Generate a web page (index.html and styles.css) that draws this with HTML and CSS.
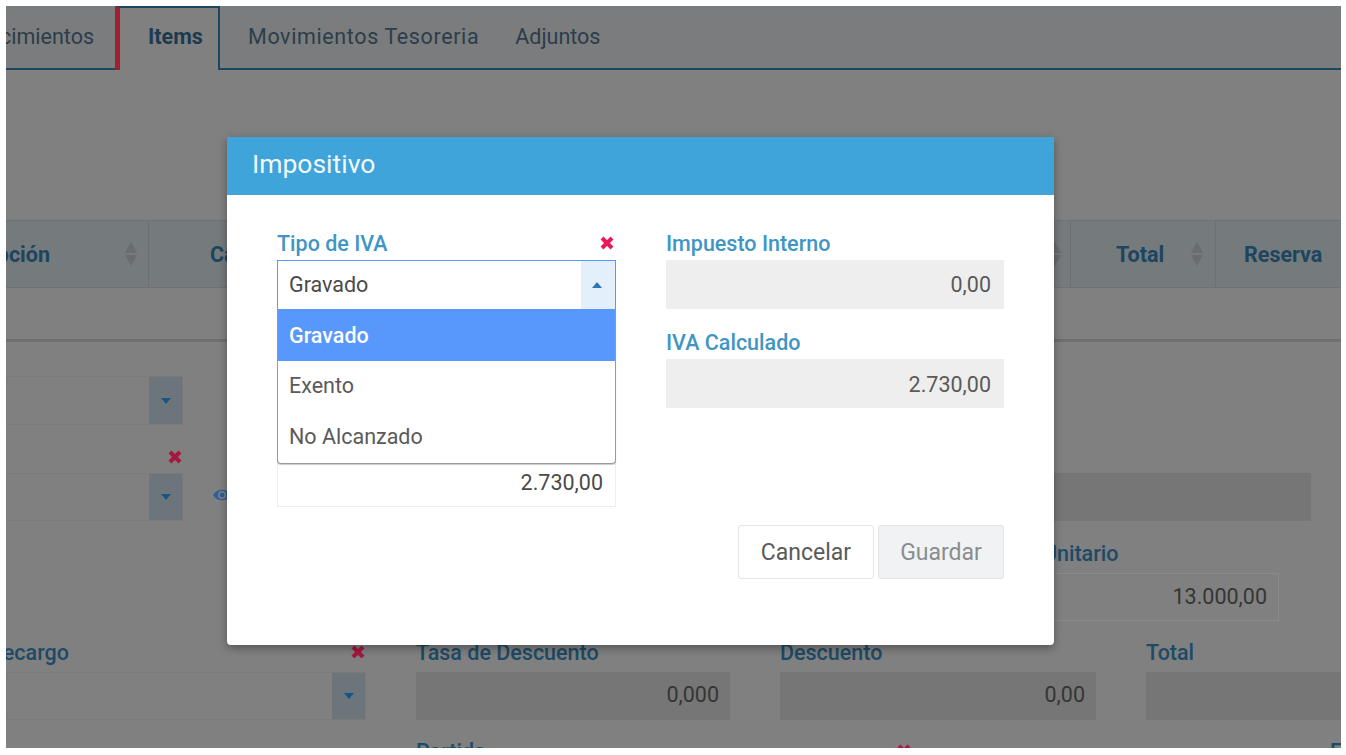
FILE: index.html
```html
<!DOCTYPE html>
<html lang="es">
<head>
  <meta charset="UTF-8" />
  <title>Impositivo</title>
  <link rel="stylesheet" href="styles.css">
</head>
<body>
  <svg class="sprites" width="0" height="0">
    <symbol id="icon-x" viewBox="0 0 14 14">
      <path d="M2 2 L12 12 M12 2 L2 12" fill="none" stroke="currentColor" stroke-width="4"/>
    </symbol>
    <symbol id="icon-down" viewBox="0 0 10 6"><path d="M0 0 H10 L5 6 Z" fill="currentColor"/></symbol>
    <symbol id="icon-up" viewBox="0 0 10 6"><path d="M0 6 H10 L5 0 Z" fill="currentColor"/></symbol>
    <symbol id="icon-sort" viewBox="0 0 12 24">
      <path d="M0 11 H12 L6 0 Z M0 13 H12 L6 24 Z" fill="currentColor"/>
    </symbol>
  </svg>

  <div class="page">
    <nav class="tabs">
      <a class="tab tab-cut">Vencimientos</a>
      <a class="tab tab-active">Items</a>
      <a class="tab tab-long">Movimientos Tesoreria</a>
      <a class="tab">Adjuntos</a>
    </nav>

    <div class="grid-head">
      <div class="col col-desc"><span>Descripción</span><svg class="sort"><use href="#icon-sort"/></svg></div>
      <div class="col col-cant"><span>Cantidad</span><svg class="sort"><use href="#icon-sort"/></svg></div>
      <div class="col col-total"><span>Total</span><svg class="sort"><use href="#icon-sort"/></svg></div>
      <div class="col col-reserva"><span>Reserva</span></div>
    </div>
    <div class="grid-empty"></div>

    <form class="form">
      <div class="row row-first">
        <div class="select w-small"><span class="select-btn"><svg class="arrow"><use href="#icon-down"/></svg></span></div>
      </div>
      <div class="row row-second">
        <div class="field w-small">
          <div class="label"><span></span><svg class="x"><use href="#icon-x"/></svg></div>
          <div class="select"><span class="select-btn"><svg class="arrow"><use href="#icon-down"/></svg></span></div>
        </div>
        <svg class="eye" viewBox="0 0 18 14"><path d="M0 7 C4 0 14 0 18 7 C14 14 4 14 0 7 Z" fill="#2f5f9a"/><circle cx="9" cy="7" r="4" fill="#808080"/><circle cx="9" cy="7" r="2.4" fill="#2f5f9a"/></svg>
        <div class="input input-off w-wide"></div>
      </div>
      <div class="row row-third">
        <div class="field w-unit">
          <div class="label"><span>Precio Unitario</span></div>
          <div class="input input-plain">13.000,00</div>
        </div>
      </div>
      <div class="row row-fourth">
        <div class="field w-rec">
          <div class="label label-cut"><span>Tasa de Recargo</span><svg class="x"><use href="#icon-x"/></svg></div>
          <div class="select"><span class="select-btn"><svg class="arrow"><use href="#icon-down"/></svg></span></div>
        </div>
        <div class="field w-tasa">
          <div class="label"><span>Tasa de Descuento</span></div>
          <div class="input input-off">0,000</div>
        </div>
        <div class="field w-desc">
          <div class="label"><span>Descuento</span></div>
          <div class="input input-off">0,00</div>
        </div>
        <div class="field w-tot">
          <div class="label"><span>Total</span></div>
          <div class="input input-off"></div>
        </div>
      </div>
      <div class="row row-fifth">
        <div class="label w-part"><span>Partida</span><svg class="x"><use href="#icon-x"/></svg></div>
        <div class="label w-end"><span>Estado</span></div>
      </div>
    </form>

    <div class="modal">
      <div class="modal-head">Impositivo</div>
      <div class="modal-body">
        <div class="modal-col">
          <div class="m-field">
            <div class="m-label"><span>Tipo de IVA</span><svg class="m-x"><use href="#icon-x"/></svg></div>
            <div class="m-select">
              <span>Gravado</span>
              <span class="m-select-btn"><svg class="arrow"><use href="#icon-up"/></svg></span>
              <ul class="m-options">
                <li class="m-option-on">Gravado</li>
                <li>Exento</li>
                <li>No Alcanzado</li>
              </ul>
            </div>
          </div>
          <div class="m-field m-field-under">
            <div class="m-input"></div>
          </div>
          <div class="m-field">
            <div class="m-label"><span>IVA</span></div>
            <div class="m-input">2.730,00</div>
          </div>
        </div>
        <div class="modal-col">
          <div class="m-field">
            <div class="m-label"><span>Impuesto Interno</span></div>
            <div class="m-input m-input-off">0,00</div>
          </div>
          <div class="m-field">
            <div class="m-label"><span>IVA Calculado</span></div>
            <div class="m-input m-input-off m-input-low">2.730,00</div>
          </div>
          <div class="m-actions">
            <button type="button" class="btn">Cancelar</button>
            <button type="button" class="btn btn-off">Guardar</button>
          </div>
        </div>
      </div>
    </div>
  </div>
</body>
</html>
```

FILE: styles.css
```css
* {
  box-sizing: border-box;
}
html, body {
  height: 100%;
  overflow: hidden;
}
body {
  margin: 0;
  background: #fff;
  font-family: Roboto, sans-serif;
  font-size: 21.5px;
  color: #353535;
}
.sprites {
  position: absolute;
}
.page {
  position: relative;
  margin: 6px 5px 0 6px;
  height: 742px;
  overflow: hidden;
  background: #808080;
}

/* tabs */
.tabs {
  display: flex;
  height: 64px;
  background: #7a7c7e;
  border-bottom: 2px solid #1d4660;
}
.tab {
  display: flex;
  align-items: center;
  padding: 0 18px;
  height: 60px;
  color: #2d3d4a;
  white-space: nowrap;
}
.tab-cut {
  width: 109px;
  padding: 0 21px 0 0;
  justify-content: flex-end;
  overflow: hidden;
  flex-shrink: 0;
}
.tab-active {
  width: 105px;
  height: 64px;
  padding: 0 0 6px 28px;
  background: #808080;
  border-left: 5px solid #a0202f;
  border-right: 2px solid #1d4660;
  border-top: 2px solid #1d4660;
  font-weight: 700;
  color: #1d3a50;
}
.tab-long {
  padding-left: 28px;
  letter-spacing: 0.62px;
}

/* table */
.grid-head {
  display: flex;
  margin-top: 150px;
  height: 68px;
  background: #757a7d;
  border-top: 1px solid #6e7174;
  border-bottom: 1px solid #6e7174;
  font-weight: 700;
  color: #1d4560;
  white-space: nowrap;
}
.col {
  display: flex;
  align-items: center;
  overflow: hidden;
  border-right: 1px solid #6c7073;
}
.col-desc {
  width: 143px;
  justify-content: flex-end;
}
.col-desc .sort {
  margin: 0 11px 0 75px;
}
.col-cant {
  width: 922px;
  padding-left: 61px;
}
.col-cant .sort {
  margin-left: auto;
  margin-right: 9px;
}
.col-total {
  width: 145px;
  padding-left: 45px;
}
.col-total .sort {
  margin-left: 27px;
}
.col-reserva {
  flex: 1;
  padding-left: 28px;
  border-right: 0;
}
.sort {
  width: 12px;
  height: 24px;
  flex-shrink: 0;
  color: #696d70;
}
.grid-empty {
  height: 54px;
  border-bottom: 3px solid #6f6f6f;
}

/* form behind the modal */
.form {
  padding-top: 34px;
}
.row {
  display: flex;
  align-items: flex-end;
}
.row-second {
  margin-top: 20px;
}
.row-third {
  margin-top: 20px;
}
.row-fourth {
  margin-top: 19px;
}
.row-fifth {
  margin-top: 19px;
}
.field {
  flex-shrink: 0;
}
.label {
  display: flex;
  justify-content: space-between;
  align-items: center;
  height: 24px;
  margin-bottom: 8px;
  font-weight: 500;
  color: #1d4a66;
  white-space: nowrap;
}
.row-second .label {
  margin-bottom: 4px;
}
.label-cut span {
  margin-left: -97px;
}
.x {
  width: 14px;
  height: 14px;
  margin-right: 1px;
  flex-shrink: 0;
  color: #a4173f;
}
.select {
  display: flex;
  justify-content: flex-end;
  height: 48px;
  border: 1px solid #7a7a7a;
}
.row-first .select {
  height: 49px;
}
.select-btn {
  display: flex;
  align-items: center;
  justify-content: center;
  width: 33px;
  background: #6c757c;
}
.arrow {
  width: 10px;
  height: 6px;
  color: #1c5480;
}
.input {
  height: 48px;
  padding: 0 11px;
  line-height: 46px;
  text-align: right;
}
.input-off {
  background: #767676;
}
.input-plain {
  border: 1px solid #8b8b8b;
}
.w-small {
  width: 177px;
}
.eye {
  width: 18px;
  height: 14px;
  margin: 0 0 19px 30px;
  flex-shrink: 0;
}
.w-wide {
  margin-left: 50px;
  flex: 0 0 1030px;
}
.w-unit {
  margin-left: 970px;
  width: 303px;
}
.w-rec {
  width: 360px;
}
.w-tasa {
  margin-left: 50px;
  width: 314px;
}
.w-desc {
  margin-left: 50px;
  width: 316px;
}
.w-tot {
  margin-left: 50px;
  width: 200px;
}
.w-part {
  margin-left: 410px;
  width: 496px;
  flex-shrink: 0;
}
.w-end {
  margin-left: 418px;
  flex-shrink: 0;
}

/* modal */
.modal {
  position: absolute;
  left: 221px;
  top: 131px;
  width: 827px;
  height: 508px;
  background: #fff;
  border-radius: 0 0 4px 4px;
  box-shadow: 0 3px 10px rgba(0, 0, 0, 0.35);
}
.modal-head {
  display: flex;
  align-items: center;
  height: 58px;
  padding: 0 0 5px 25px;
  background: #3ea4da;
  color: #f2f9fd;
  font-size: 26.5px;
}
.modal-body {
  display: flex;
  gap: 50px;
  padding: 36px 50px 0;
}
.modal-col {
  width: 339px;
}
.modal-col + .modal-col {
  width: 338px;
}
.m-field {
  margin-bottom: 21px;
}
.m-field-under {
  padding-top: 29px;
}
.m-label {
  display: flex;
  justify-content: space-between;
  align-items: center;
  height: 24px;
  margin-bottom: 5px;
  font-weight: 500;
  color: #3f96c4;
  white-space: nowrap;
}
.m-x {
  width: 14px;
  height: 14px;
  margin-right: 2px;
  color: #e8185a;
}
.m-select {
  position: relative;
  display: flex;
  align-items: center;
  height: 49px;
  padding: 0 0 2px 11px;
  border: 1px solid #5897fb;
  border-bottom: 0;
  color: #4a4a4a;
}
.m-select-btn {
  position: absolute;
  top: 0;
  right: 0;
  bottom: 0;
  display: flex;
  align-items: center;
  justify-content: center;
  width: 34px;
  background: #e3f0fb;
}
.m-select-btn .arrow {
  color: #2f78ad;
  margin-right: 2px;
}
.m-options {
  position: absolute;
  top: 48px;
  left: -1px;
  right: -1px;
  margin: 0;
  padding: 0;
  list-style: none;
  background: #fff;
  border: 1px solid #9a9a9a;
  border-top: 0;
  border-radius: 0 0 4px 4px;
  box-shadow: 0 1px 1px rgba(0, 0, 0, 0.2);
}
.m-options li {
  display: flex;
  align-items: center;
  height: 51px;
  padding: 0 0 2px 11px;
  color: #5a5a5a;
}
.m-options .m-option-on {
  height: 52px;
  padding-bottom: 0;
  background: #5897fb;
  color: #fff;
  font-weight: 500;
}
.m-input {
  height: 49px;
  padding: 0 12px;
  line-height: 47px;
  text-align: right;
  border: 1px solid #eee;
  color: #4a4a4a;
}
.m-input-off {
  background: #eee;
  color: #5a5a5a;
}
.m-input-low {
  line-height: 49px;
}
.m-actions {
  display: flex;
  justify-content: flex-end;
  gap: 4px;
  margin-top: 117px;
}
.btn {
  height: 54px;
  padding: 0;
  width: 136px;
  background: #fff;
  border: 1px solid #e5e5e5;
  border-radius: 3px;
  font: inherit;
  font-size: 23px;
  color: #5a5a5a;
}
.btn-off {
  width: 126px;
  background: #f1f2f4;
  border-color: #e3e4e6;
  color: #8a8d90;
}
```
